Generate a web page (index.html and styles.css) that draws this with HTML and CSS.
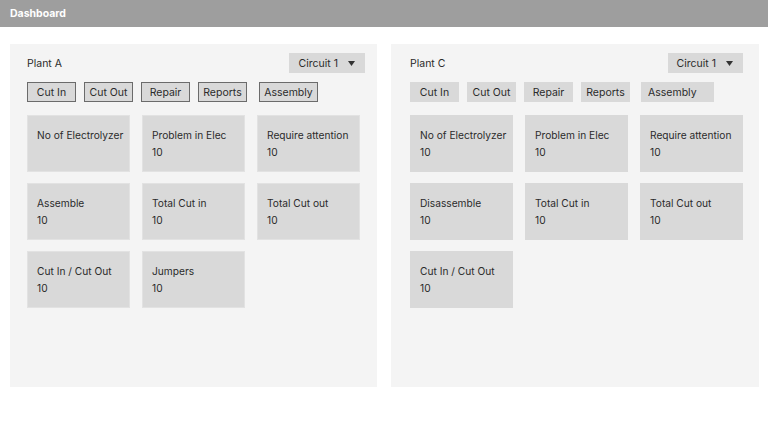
FILE: index.html
```html
<!DOCTYPE html>
<html>
<head>
<meta charset="utf-8">
<link rel="stylesheet" href="styles.css">
</head>
<body>
<header class="topbar">Dashboard</header>
<main class="panels">
  <section class="panel panel-a">
    <div class="panel-head">
      <span class="plant">Plant A</span>
      <div class="select select-a"><span>Circuit 1</span><svg class="caret" width="7" height="5" viewBox="0 0 7 5"><polygon points="0,0 7,0 3.5,5" fill="#333"/></svg></div>
    </div>
    <div class="tabs">
      <button class="tab bordered">Cut In</button>
      <button class="tab bordered">Cut Out</button>
      <button class="tab bordered">Repair</button>
      <button class="tab bordered">Reports</button>
      <button class="tab bordered wide-a">Assembly</button>
    </div>
    <div class="cards">
      <div class="card bordered-card"><div>No of Electrolyzer</div></div>
      <div class="card bordered-card"><div>Problem in Elec</div><div>10</div></div>
      <div class="card bordered-card"><div>Require attention</div><div>10</div></div>
      <div class="card bordered-card"><div>Assemble</div><div>10</div></div>
      <div class="card bordered-card"><div>Total Cut in</div><div>10</div></div>
      <div class="card bordered-card"><div>Total Cut out</div><div>10</div></div>
      <div class="card bordered-card"><div>Cut In / Cut Out</div><div>10</div></div>
      <div class="card bordered-card"><div>Jumpers</div><div>10</div></div>
    </div>
  </section>
  <section class="panel panel-c">
    <div class="panel-head">
      <span class="plant">Plant C</span>
      <div class="select select-c"><span>Circuit 1</span><svg class="caret" width="7" height="5" viewBox="0 0 7 5"><polygon points="0,0 7,0 3.5,5" fill="#333"/></svg></div>
    </div>
    <div class="tabs">
      <button class="tab">Cut In</button>
      <button class="tab">Cut Out</button>
      <button class="tab">Repair</button>
      <button class="tab">Reports</button>
      <button class="tab wide-c">Assembly</button>
    </div>
    <div class="cards">
      <div class="card"><div>No of Electrolyzer</div><div>10</div></div>
      <div class="card"><div>Problem in Elec</div><div>10</div></div>
      <div class="card"><div>Require attention</div><div>10</div></div>
      <div class="card"><div>Disassemble</div><div>10</div></div>
      <div class="card"><div>Total Cut in</div><div>10</div></div>
      <div class="card"><div>Total Cut out</div><div>10</div></div>
      <div class="card"><div>Cut In / Cut Out</div><div>10</div></div>
    </div>
  </section>
</main>
</body>
</html>
```
FILE: styles.css
```css
* { box-sizing: border-box; }
html, body { margin: 0; padding: 0; background: #fff; }
body {
  font-family: Inter, "Noto Sans", sans-serif;
  font-size: 10.5px;
  color: #2b2b2b;
  width: 768px;
  height: 432px;
  overflow: hidden;
}
.topbar {
  height: 27px;
  background: #9e9e9e;
  color: #fff;
  font-weight: 700;
  font-size: 10.5px;
  padding-left: 10px;
  display: flex;
  align-items: center;
}
.panels {
  display: grid;
  grid-template-columns: 367px 368px;
  column-gap: 14px;
  padding: 17px 0 0 10px;
}
.panel {
  height: 343px;
  background: #f4f4f4;
  padding-top: 9px;
}
.panel-a { padding-left: 17px; padding-right: 12px; }
.panel-c { padding-left: 19px; padding-right: 16px; }
.panel-head {
  display: flex;
  justify-content: space-between;
  align-items: center;
  height: 20px;
}
.plant { font-size: 10.5px; }
.select {
  height: 20px;
  width: 76px;
  background: #d9d9d9;
  display: flex;
  align-items: center;
  justify-content: flex-end;
  gap: 10px;
  padding-right: 10px;
}
.select-c { width: 75px; }
.caret { display: block; }
.tabs {
  display: flex;
  gap: 8px;
  margin-top: 9px;
}
.tab {
  font-family: inherit;
  font-size: 10.5px;
  color: #2b2b2b;
  height: 20px;
  width: 49px;
  background: #d9d9d9;
  border: none;
  padding: 0;
  margin: 0;
  text-align: center;
  white-space: nowrap;
}
.tab.bordered { border: 1px solid #6b6b6b; }
.wide-a { margin-left: 4px; width: 59px; }
.wide-c { margin-left: 3px; width: 73px; text-align: left; padding-left: 7px; }
.cards {
  display: grid;
  grid-template-columns: repeat(3, 103px);
  grid-auto-rows: 57px;
  column-gap: 12px;
  row-gap: 11px;
  margin-top: 13px;
}
.card {
  background: #d9d9d9;
  padding: 12px 0 0 10px;
  font-size: 10.2px;
  line-height: 17px;
  white-space: nowrap;
}
.bordered-card { border: 1px solid #e2e2e2; padding: 11px 0 0 9px; }
```
